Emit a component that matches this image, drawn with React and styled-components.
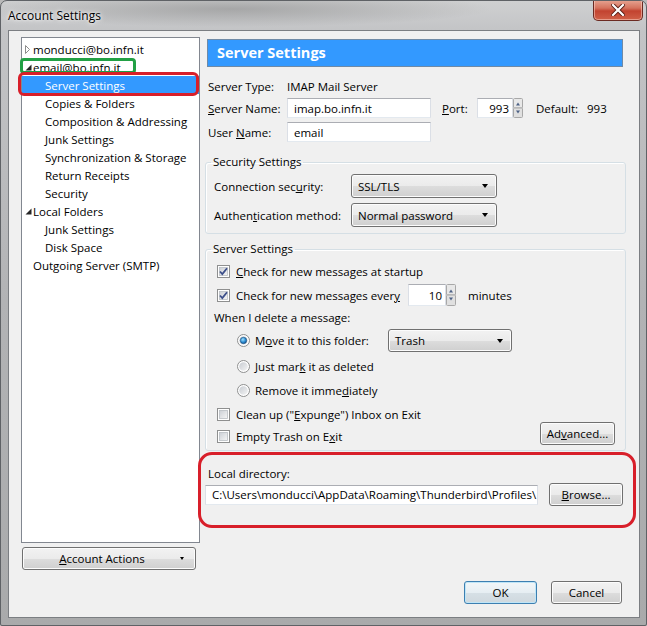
import React from "react";
import styled, { createGlobalStyle } from "styled-components";

const GlobalStyle = createGlobalStyle`
  html, body { margin: 0; padding: 0; }
  body {
    font-family: "Open Sans", "Noto Sans", sans-serif;
    font-size: 11.5px;
    color: #000;
    background: #b9b9b9;
  }
`;

const Window = styled.div`
  width: 647px;
  height: 626px;
  box-sizing: border-box;
  display: flex;
  flex-direction: column;
  border: 1px solid #5f6266;
  border-radius: 7px 7px 2px 2px;
  background:
    radial-gradient(ellipse 260px 18px at 230px 8px, rgba(120, 120, 120, 0.45), transparent),
    linear-gradient(180deg, #cfd0d1 0px, #c3c4c6 30px, #b2b3b5 300px, #a9aaab 626px);
  overflow: hidden;
`;

const TitleBar = styled.div`
  height: 29px;
  display: flex;
  align-items: flex-start;
  padding-left: 7px;
`;

const Title = styled.div`
  margin-top: 6px;
  font-size: 12px;
  text-shadow: 0 0 6px #fff, 0 0 3px #fff;
`;

const CloseButton = styled.div`
  margin-left: auto;
  margin-right: 3px;
  margin-top: -1px;
  width: 48px;
  height: 20px;
  border: 1px solid #6b2a22;
  border-top: none;
  border-radius: 0 0 5px 5px;
  background: linear-gradient(180deg, #e7a593 0%, #d5735e 40%, #c24330 55%, #d06048 100%);
  box-shadow: inset 0 0 0 1px rgba(255, 220, 210, 0.5);
  display: flex;
  align-items: center;
  justify-content: center;
`;

const Client = styled.div`
  flex: 1;
  margin: 0 6px 7px 7px;
  border: 1px solid #7b7e82;
  background: #f0f0f0;
  display: flex;
  flex-direction: column;
  padding: 6px 0 13px 12px;
`;

const TopRow = styled.div`
  display: flex;
  gap: 5px;
  height: 533px;
`;

const LeftColumn = styled.div`
  width: 179px;
  display: flex;
  flex-direction: column;
  gap: 4px;
`;

const Tree = styled.div`
  position: relative;
  height: 506px;
  box-sizing: border-box;
  border: 1px solid #828790;
  background: #fff;
  padding-top: 2px;
`;

const TreeRow = styled.div`
  height: 18px;
  display: flex;
  align-items: center;
  padding-left: ${(p) => p.indent}px;
  background: ${(p) => (p.selected ? "#3399ff" : "transparent")};
  color: ${(p) => (p.selected ? "#fff" : "#000")};
  white-space: nowrap;
`;

const Twisty = styled.span`
  width: 8px;
  display: inline-flex;
  align-items: center;
`;

const Annotation = styled.div`
  position: absolute;
  left: ${(p) => p.x}px;
  top: ${(p) => p.y}px;
  width: ${(p) => p.w}px;
  height: ${(p) => p.h}px;
  box-sizing: border-box;
  border: ${(p) => p.thick}px solid ${(p) => p.color};
  border-radius: ${(p) => p.r}px;
  pointer-events: none;
`;

const Button = styled.div`
  height: ${(p) => p.h || 23}px;
  width: ${(p) => p.w}px;
  box-sizing: border-box;
  border: 1px solid ${(p) => (p.primary ? "#3c7fb1" : "#707070")};
  border-radius: 3px;
  background: ${(p) =>
    p.primary
      ? "linear-gradient(180deg, #f2f6f8 0%, #e6eef3 50%, #d6e0e6 51%, #cfd8de 100%)"
      : "linear-gradient(180deg, #f2f2f2 0%, #ebebeb 50%, #dddddd 51%, #cfcfcf 100%)"};
  box-shadow: inset 0 0 0 1px ${(p) => (p.primary ? "#bfe5f7" : "#fcfcfc")};
  display: flex;
  align-items: center;
  justify-content: center;
  position: relative;
  flex-shrink: 0;
  white-space: nowrap;
`;

const MenuArrow = styled.span`
  position: absolute;
  right: 11px;
  top: 9px;
  width: 0;
  height: 0;
  border-left: 2px solid transparent;
  border-right: 2px solid transparent;
  border-top: 3px solid #000;
`;

const RightColumn = styled.div`
  width: 421px;
  display: flex;
  flex-direction: column;
`;

const Header = styled.div`
  margin: 2px 0 0 2px;
  width: 416px;
  height: 28px;
  box-sizing: border-box;
  background: #3399ff;
  border: 1px solid #6f8aa6;
  color: #fff;
  font-weight: bold;
  font-size: 14.5px;
  display: flex;
  align-items: center;
  padding-left: 9px;
  padding-bottom: 2px;
`;

const FieldRow = styled.div`
  display: flex;
  align-items: center;
  height: ${(p) => p.h || 20}px;
  margin-top: ${(p) => p.mt || 0}px;
  padding-left: ${(p) => p.pl || 0}px;
  white-space: nowrap;
`;

const Label = styled.span`
  width: ${(p) => p.w}px;
  flex-shrink: 0;
  margin-left: ${(p) => p.ml || 0}px;
`;

const Key = styled.span`
  text-decoration: underline;
`;

const TextBox = styled.div`
  width: ${(p) => p.w}px;
  height: ${(p) => p.h || 20}px;
  box-sizing: border-box;
  border: 1px solid #dbdfe6;
  border-top-color: #abadb3;
  border-bottom-color: #e3e9ef;
  background: #fff;
  display: flex;
  align-items: center;
  justify-content: ${(p) => (p.right ? "flex-end" : "flex-start")};
  padding: 0 3px 0 ${(p) => p.pl || 6}px;
  overflow: hidden;
  white-space: nowrap;
  flex-shrink: 0;
`;

const Combo = styled.div`
  width: ${(p) => p.w}px;
  height: ${(p) => p.h || 24}px;
  box-sizing: border-box;
  border: 1px solid #707070;
  border-radius: 3px;
  background: linear-gradient(180deg, #f2f2f2 0%, #ebebeb 50%, #dddddd 51%, #cfcfcf 100%);
  box-shadow: inset 0 0 0 1px #fcfcfc;
  display: flex;
  align-items: center;
  padding: 0 8px 0 6px;
  flex-shrink: 0;
  span:first-child { flex: 1; }
`;

const ComboArrow = styled.span`
  width: 0;
  height: 0;
  border-left: 3.5px solid transparent;
  border-right: 3.5px solid transparent;
  border-top: 4px solid #000;
`;

const GroupBox = styled.fieldset`
  margin: ${(p) => p.mt}px 0 0 0;
  padding: ${(p) => p.pad};
  border: 1px solid #d5dfe5;
  border-radius: 3px;
  min-width: 0;
  box-shadow: inset 1px 1px 0 #fff;
`;

const Legend = styled.legend`
  padding: 0 2px;
  margin-left: -3px;
  line-height: 16px;
  font-size: 11.5px;
`;

const CheckRow = styled.div`
  display: flex;
  align-items: center;
  height: ${(p) => p.h || 20}px;
  margin-top: ${(p) => p.mt || 0}px;
  padding-left: ${(p) => p.pl || 3}px;
  gap: ${(p) => p.gap || 6}px;
  white-space: nowrap;
`;

const SplitRow = styled.div`
  display: flex;
  align-items: flex-end;
  justify-content: space-between;
  margin-top: 4px;
  padding-right: 2px;
`;

const LocalDir = styled.div`
  position: relative;
  margin-top: 13px;
`;

const DirLabel = styled.div`
  height: 18px;
  display: flex;
  align-items: center;
  padding-left: 3px;
`;

const DirRow = styled.div`
  display: flex;
  align-items: center;
  gap: 11px;
  margin-top: 1px;
`;

const BottomRow = styled.div`
  display: flex;
  justify-content: flex-end;
  gap: 14px;
  margin-top: 11px;
  padding-right: 17px;
`;

const NumberBox = styled.div`
  display: flex;
  align-items: stretch;
  flex-shrink: 0;
`;

function Checkbox({ checked }) {
  return (
    <svg width="13" height="13" viewBox="0 0 13 13" style={{ flexShrink: 0 }}>
      <defs>
        <linearGradient id="cbg" x1="0" y1="0" x2="1" y2="1">
          <stop offset="0" stopColor="#cbcfd5" />
          <stop offset="1" stopColor="#f6f6f6" />
        </linearGradient>
      </defs>
      <rect x="0.5" y="0.5" width="12" height="12" fill="#fff" stroke="#8e8f8f" />
      <rect x="2.5" y="2.5" width="8" height="8" fill="url(#cbg)" stroke="#b9bdc3" strokeWidth="0.8" />
      {checked && (
        <path d="M3 6.5 L5.3 9 L10 3.2" fill="none" stroke="#3c4f8a" strokeWidth="1.8" />
      )}
    </svg>
  );
}

function Radio({ checked }) {
  return (
    <svg width="13" height="13" viewBox="0 0 13 13" style={{ flexShrink: 0 }}>
      <defs>
        <linearGradient id="rbg" x1="0" y1="0" x2="1" y2="1">
          <stop offset="0" stopColor="#c8ccd2" />
          <stop offset="1" stopColor="#f4f4f4" />
        </linearGradient>
        <radialGradient id="rdot" cx="0.4" cy="0.35" r="0.7">
          <stop offset="0" stopColor="#9fe0ff" />
          <stop offset="0.6" stopColor="#2a8bd1" />
          <stop offset="1" stopColor="#154f8a" />
        </radialGradient>
      </defs>
      <circle cx="6.5" cy="6.5" r="6" fill="#fff" stroke="#8e8f8f" />
      <circle cx="6.5" cy="6.5" r="4.3" fill="url(#rbg)" />
      {checked && <circle cx="6.5" cy="6.5" r="3.2" fill="url(#rdot)" stroke="#1b4f7e" strokeWidth="0.6" />}
    </svg>
  );
}

function Spinner({ h }) {
  const mid = h / 2;
  return (
    <svg width="10" height={h} viewBox={`0 0 10 ${h}`} style={{ flexShrink: 0 }}>
      <rect x="0.5" y="0.5" width="9" height={mid - 0.5} rx="1" fill="#e8e8e8" stroke="#a8a8a8" />
      <rect x="0.5" y={mid} width="9" height={mid - 0.5} rx="1" fill="#e0e0e0" stroke="#a8a8a8" />
      <path d={`M3 ${mid - 2.5} L5 ${mid - 5.5} L7 ${mid - 2.5} Z`} fill="#4d6185" />
      <path d={`M3 ${mid + 2.5} L5 ${mid + 5.5} L7 ${mid + 2.5} Z`} fill="#4d6185" />
    </svg>
  );
}

function Twist({ open }) {
  return (
    <Twisty>
      {open ? (
        <svg width="7" height="7" viewBox="0 0 7 7">
          <path d="M6.5 0.5 L6.5 6.5 L0.5 6.5 Z" fill="#262626" />
        </svg>
      ) : (
        <svg width="5" height="9" viewBox="0 0 5 9">
          <path d="M0.5 0.5 L4.5 4.5 L0.5 8.5 Z" fill="#fff" stroke="#8c8c8c" />
        </svg>
      )}
    </Twisty>
  );
}

const treeItems = [
  { label: "monducci@bo.infn.it", twisty: "closed" },
  { label: "email@bo.infn.it", twisty: "open" },
  { label: "Server Settings", child: true, selected: true },
  { label: "Copies & Folders", child: true },
  { label: "Composition & Addressing", child: true },
  { label: "Junk Settings", child: true },
  { label: "Synchronization & Storage", child: true },
  { label: "Return Receipts", child: true },
  { label: "Security", child: true },
  { label: "Local Folders", twisty: "open" },
  { label: "Junk Settings", child: true },
  { label: "Disk Space", child: true },
  { label: "Outgoing Server (SMTP)", twisty: "none" },
];

function AccountTree() {
  return (
    <Tree>
      {treeItems.map((item, i) => (
        <TreeRow key={i} indent={item.child ? 23 : 3} selected={item.selected}>
          {!item.child && (item.twisty === "none" ? <Twisty /> : <Twist open={item.twisty === "open"} />)}
          {item.label}
        </TreeRow>
      ))}
      <Annotation x={-2} y={20} w={116} h={16} thick={3} color="#22a045" r={4} />
      <Annotation x={-4} y={34} w={181} h={24} thick={3} color="#d81f2a" r={6} />
    </Tree>
  );
}

export default function App() {
  return (
    <>
      <GlobalStyle />
      <Window>
        <TitleBar>
          <Title>Account Settings</Title>
          <CloseButton>
            <svg width="14" height="12" viewBox="0 0 14 12">
              <path d="M2 1 L12 11 M12 1 L2 11" stroke="#5a1d14" strokeWidth="4" strokeLinecap="square" />
              <path d="M2 1 L12 11 M12 1 L2 11" stroke="#fff" strokeWidth="2.2" strokeLinecap="square" />
            </svg>
          </CloseButton>
        </TitleBar>
        <Client>
          <TopRow>
            <LeftColumn>
              <AccountTree />
              <Button w={174} style={{ marginLeft: 1 }}>
                <span style={{ marginRight: 14 }}>
                  <Key>A</Key>ccount Actions
                </span>
                <MenuArrow />
              </Button>
            </LeftColumn>
            <RightColumn>
              <Header>Server Settings</Header>

              <FieldRow mt={9} pl={3}>
                <Label w={79}>Server Type:</Label>
                <span>IMAP Mail Server</span>
              </FieldRow>
              <FieldRow mt={2} pl={3}>
                <Label w={79}>
                  <Key>S</Key>erver Name:
                </Label>
                <TextBox w={144}>imap.bo.infn.it</TextBox>
                <Label w={35} ml={11}>
                  <Key>P</Key>ort:
                </Label>
                <NumberBox>
                  <TextBox w={36} right>
                    993
                  </TextBox>
                  <Spinner h={20} />
                </NumberBox>
                <Label w={51} ml={13}>
                  Default:
                </Label>
                <span>993</span>
              </FieldRow>
              <FieldRow mt={4} pl={3}>
                <Label w={79}>
                  User <Key>N</Key>ame:
                </Label>
                <TextBox w={144}>email</TextBox>
              </FieldRow>

              <GroupBox mt={12} pad="4px 8px 6px 8px">
                <Legend>Security Settings</Legend>
                <FieldRow h={24}>
                  <Label w={137}>
                    Connection sec<Key>u</Key>rity:
                  </Label>
                  <Combo w={146}>
                    <span>SSL/TLS</span>
                    <ComboArrow />
                  </Combo>
                </FieldRow>
                <FieldRow mt={5} h={24}>
                  <Label w={137}>
                    Authen<Key>t</Key>ication method:
                  </Label>
                  <Combo w={146}>
                    <span>Normal password</span>
                    <ComboArrow />
                  </Combo>
                </FieldRow>
              </GroupBox>

              <GroupBox mt={7} pad="4px 8px 4px 8px">
                <Legend>Server Settings</Legend>
                <CheckRow>
                  <Checkbox checked />
                  <span>
                    <Key>C</Key>heck for new messages at startup
                  </span>
                </CheckRow>
                <CheckRow mt={3} h={22}>
                  <Checkbox checked />
                  <Label w={166}>
                    Check for new messages ever<Key>y</Key>
                  </Label>
                  <NumberBox>
                    <TextBox w={38} h={22} right>
                      10
                    </TextBox>
                    <Spinner h={22} />
                  </NumberBox>
                  <Label ml={6}>minutes</Label>
                </CheckRow>
                <FieldRow mt={2} h={18}>
                  When I delete a message:
                </FieldRow>
                <CheckRow mt={3} h={23} pl={23} gap={5}>
                  <Radio checked />
                  <Label w={128}>
                    M<Key>o</Key>ve it to this folder:
                  </Label>
                  <Combo w={124} h={23}>
                    <span>Trash</span>
                    <ComboArrow />
                  </Combo>
                </CheckRow>
                <CheckRow mt={4} pl={23} gap={5}>
                  <Radio />
                  <span>
                    Just mar<Key>k</Key> it as deleted
                  </span>
                </CheckRow>
                <CheckRow mt={4} pl={23} gap={5}>
                  <Radio />
                  <span>
                    Remove it imme<Key>d</Key>iately
                  </span>
                </CheckRow>
                <SplitRow>
                  <div>
                    <CheckRow>
                      <Checkbox />
                      <span>
                        Clean up ("<Key>E</Key>xpunge") Inbox on Exit
                      </span>
                    </CheckRow>
                    <CheckRow mt={2}>
                      <Checkbox />
                      <span>
                        Empty Trash on E<Key>x</Key>it
                      </span>
                    </CheckRow>
                  </div>
                  <Button w={75} style={{ marginBottom: 1 }}>
                    <span>
                      Ad<Key>v</Key>anced...
                    </span>
                  </Button>
                </SplitRow>
              </GroupBox>

              <LocalDir>
                <DirLabel>Local directory:</DirLabel>
                <DirRow>
                  <TextBox w={333}>
                    C:\Users\monducci\AppData\Roaming\Thunderbird\Profiles\
                  </TextBox>
                  <Button w={74}>
                    <span>
                      <Key>B</Key>rowse...
                    </span>
                  </Button>
                </DirRow>
                <Annotation x={-7} y={-12} w={438} h={76} thick={3} color="#d81f2a" r={14} />
              </LocalDir>
            </RightColumn>
          </TopRow>
          <BottomRow>
            <Button w={73} primary>
              OK
            </Button>
            <Button w={71}>Cancel</Button>
          </BottomRow>
        </Client>
      </Window>
    </>
  );
}
